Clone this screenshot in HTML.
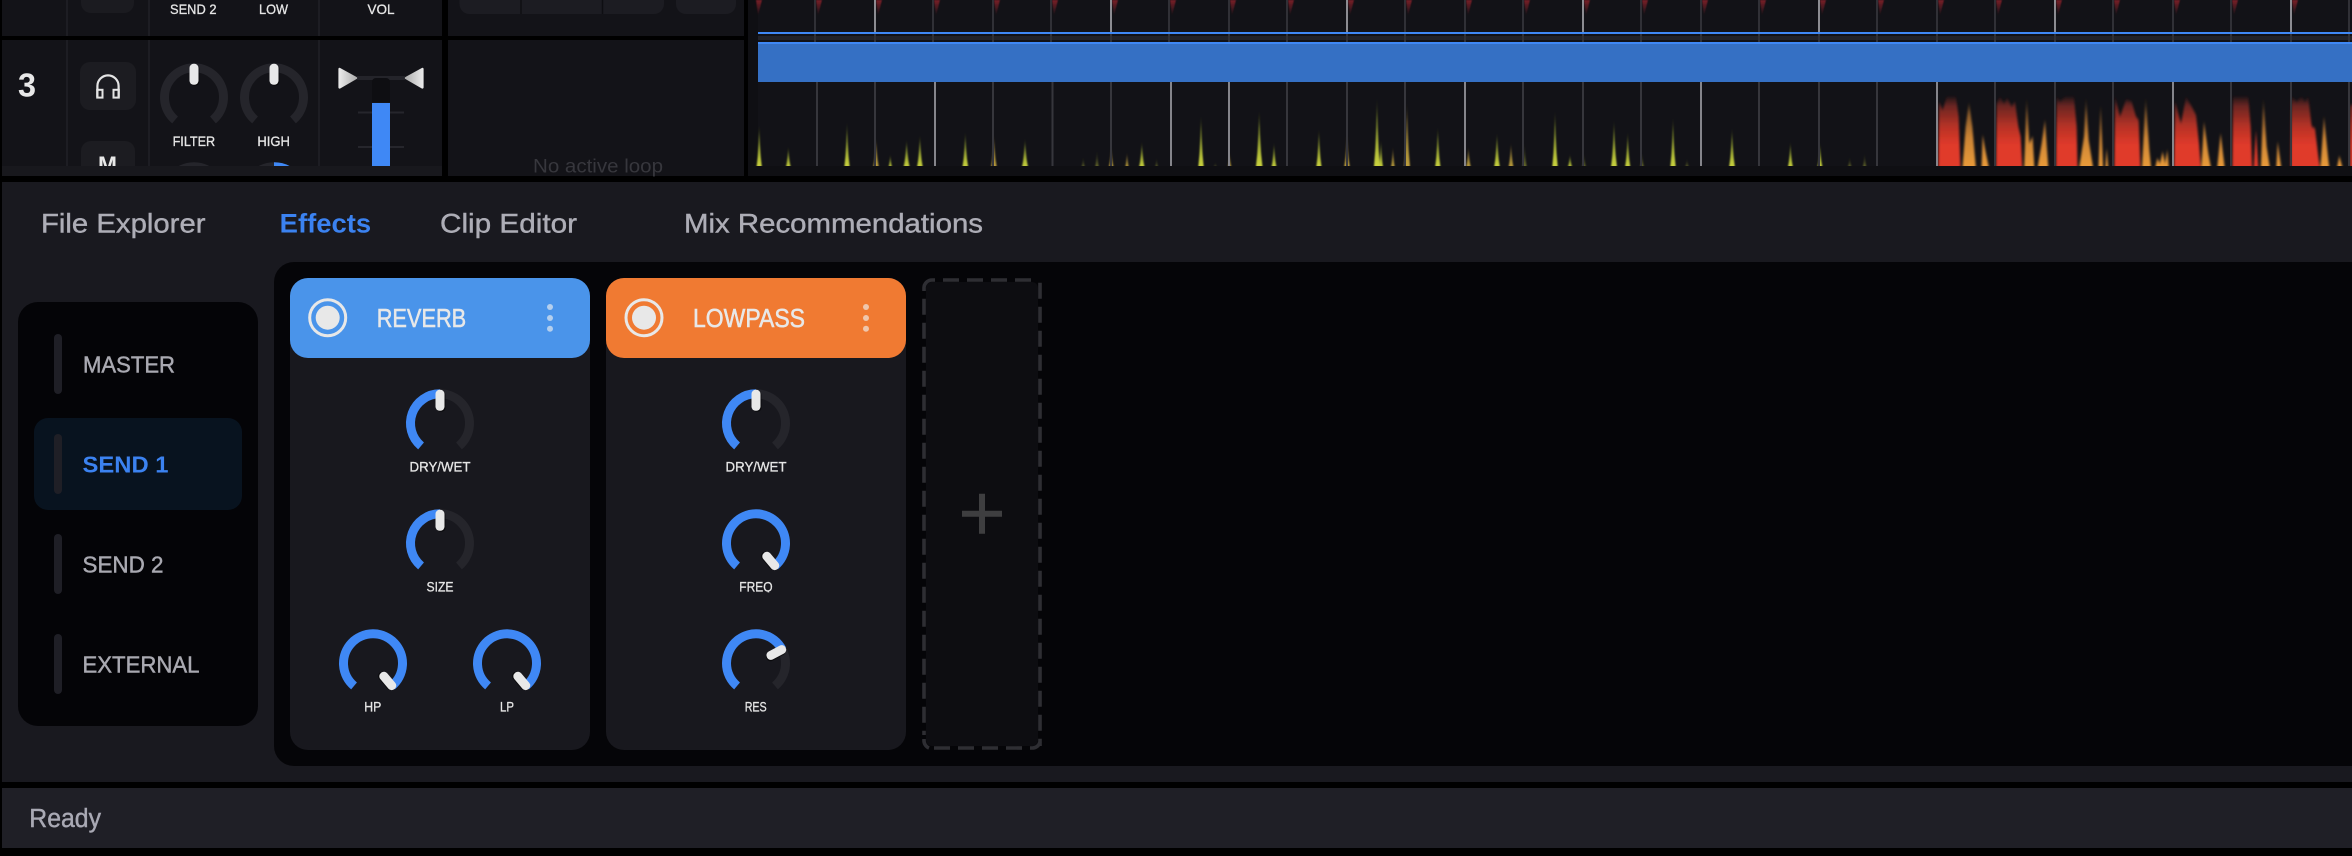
<!DOCTYPE html>
<html lang="en">
<head>
<meta charset="utf-8">
<title>Mixer Effects</title>
<style>
html,body{margin:0;padding:0;background:#000;width:2352px;height:856px;overflow:hidden}
svg{display:block}
text{font-family:"Liberation Sans",sans-serif}
text[fill="#e6e6e6"]{stroke:#e6e6e6;stroke-width:.3px}
text[fill="#e8e8e8"]{stroke:#e8e8e8;stroke-width:.55px}
text[fill="#adadb6"]{stroke:#adadb6;stroke-width:.4px}
text[fill="#a9a9b1"]{stroke:#a9a9b1;stroke-width:.45px}
text[fill="#a9a9b4"]{stroke:#a9a9b4;stroke-width:.4px}
</style>
</head>
<body>
<svg xmlns="http://www.w3.org/2000/svg" width="2352" height="856" viewBox="0 0 2352 856">
<defs>
  <linearGradient id="gy" x1="0" y1="0" x2="0" y2="1"><stop offset="0" stop-color="#5f6a20" stop-opacity=".1"/><stop offset=".3" stop-color="#6f7a28"/><stop offset=".75" stop-color="#b5c038"/><stop offset="1" stop-color="#d0d840"/></linearGradient>
  <linearGradient id="go" x1="0" y1="0" x2="0" y2="1"><stop offset="0" stop-color="#5f4a20" stop-opacity=".1"/><stop offset=".3" stop-color="#75622e"/><stop offset=".75" stop-color="#ad9238"/><stop offset="1" stop-color="#c2a23e"/></linearGradient>
  <linearGradient id="gd" x1="0" y1="0" x2="0" y2="1"><stop offset="0" stop-color="#4e5420" stop-opacity="0"/><stop offset="1" stop-color="#7b7f30"/></linearGradient>
  <linearGradient id="gr" x1="0" y1="0" x2="0" y2="1"><stop offset="0" stop-color="#7a1e27"/><stop offset="1" stop-color="#7a1e27" stop-opacity="0"/></linearGradient>
  <linearGradient id="red" gradientUnits="userSpaceOnUse" x1="0" y1="105" x2="0" y2="318"><stop offset="0" stop-color="#4a1c1c" stop-opacity=".25"/><stop offset=".15" stop-color="#6a2622"/><stop offset=".45" stop-color="#b83226"/><stop offset=".7" stop-color="#e03a2a"/><stop offset="1" stop-color="#e03a2a"/></linearGradient>
  <linearGradient id="org" gradientUnits="userSpaceOnUse" x1="0" y1="105" x2="0" y2="318"><stop offset="0" stop-color="#5a4020" stop-opacity=".25"/><stop offset=".25" stop-color="#85582a"/><stop offset=".6" stop-color="#cc8434"/><stop offset="1" stop-color="#e89a3a"/></linearGradient>
  <linearGradient id="tri" x1="0" y1="0" x2="1" y2="0"><stop offset="0" stop-color="#e8e8e8"/><stop offset="1" stop-color="#b0b0b0"/></linearGradient>
  <linearGradient id="tri2" x1="1" y1="0" x2="0" y2="0"><stop offset="0" stop-color="#e8e8e8"/><stop offset="1" stop-color="#b0b0b0"/></linearGradient>
  <filter id="b1" filterUnits="userSpaceOnUse" x="740" y="70" width="1612" height="120"><feGaussianBlur stdDeviation=".7 1.6"/></filter>
  <filter id="b2" filterUnits="userSpaceOnUse" x="0" y="0" width="1400" height="400"><feGaussianBlur stdDeviation="3 5"/></filter>
  <filter id="b3" x="-50%" y="-20%" width="200%" height="140%"><feGaussianBlur stdDeviation=".6"/></filter>
  <clipPath id="c1"><rect x="2" y="40" width="440" height="126"/></clipPath>
  <clipPath id="c2"><rect x="748" y="82" width="1604" height="84"/></clipPath>
  <clipPath id="c3"><rect x="730" y="575" width="50" height="17.4"/></clipPath>
  <path id="s" d="M-3 0L-1.6 -.28L-.7 -.6L0 -1L.7 -.6L1.6 -.28L3 0Z"/>
  <path id="rs" d="M1 0H7L3 16Z" fill="url(#gr)"/>
  <g id="kh"><rect x="-3.5" y="-32.5" width="9" height="21" rx="4.2" fill="#000" opacity=".55"/><rect x="-4.5" y="-33.5" width="9" height="21" rx="4.2" fill="#e8e8e8"/></g>
  <path id="tr" d="M-18.96 22.6A29.5 29.5 0 1 1 18.96 22.6" fill="none" stroke="#25252b" stroke-width="9"/>
  <path id="b0" d="M-18.96 22.6A29.5 29.5 0 0 1 0 -29.5" fill="none" stroke="#3f88f5" stroke-width="9"/>
  <path id="bf" d="M-18.96 22.6A29.5 29.5 0 1 1 18.96 22.6" fill="none" stroke="#3f88f5" stroke-width="9"/>
  <path id="bm" d="M-18.96 22.6A29.5 29.5 0 1 1 26.05 -13.85" fill="none" stroke="#3f88f5" stroke-width="9"/>
</defs>

<rect width="2352" height="856" fill="#000"/>

<!-- mixer column -->
<rect x="2" y="0" width="440" height="36" fill="#131318"/>
<rect x="2" y="40" width="440" height="136" fill="#131318"/>
<rect x="2" y="166" width="440" height="10" fill="#18181d"/>
<path d="M67 0V36M149 0V36M319 0V36M67 40V166M149 40V166M319 40V166" stroke="#1d1d23" stroke-width="2"/>
<path d="M81 0H134V3A10 10 0 0 1 124 13H91A10 10 0 0 1 81 3Z" fill="#1b1b20"/>
<text x="170" y="14" font-size="14" fill="#e6e6e6" textLength="46.5" lengthAdjust="spacingAndGlyphs">SEND 2</text>
<text x="259" y="14" font-size="14" fill="#e6e6e6" textLength="29" lengthAdjust="spacingAndGlyphs">LOW</text>
<text x="367.5" y="14" font-size="14" fill="#e6e6e6" textLength="27" lengthAdjust="spacingAndGlyphs">VOL</text>

<text x="18" y="96.5" font-size="33" font-weight="bold" fill="#e8e8e8" textLength="18" lengthAdjust="spacingAndGlyphs" style="stroke-width:0">3</text>
<rect x="80" y="62" width="56" height="48" rx="10" fill="#1c1c21"/>
<path d="M97.4 97V86A10.6 10.6 0 0 1 118.6 86V97" fill="none" stroke="#e4e4e4" stroke-width="2.2"/>
<rect x="97.2" y="89.8" width="5.3" height="7.8" fill="none" stroke="#e4e4e4" stroke-width="2"/>
<rect x="113.5" y="89.8" width="5.3" height="7.8" fill="none" stroke="#e4e4e4" stroke-width="2"/>

<g clip-path="url(#c1)">
  <rect x="81" y="141" width="54" height="40" rx="10" fill="#1c1c21"/>
  <text x="98" y="172" font-size="22" font-weight="bold" fill="#e8e8e8" textLength="19" lengthAdjust="spacingAndGlyphs" style="stroke-width:0">M</text>
  <g transform="translate(194,196.3)"><use href="#tr"/></g>
  <g transform="translate(274,196.3)"><use href="#tr"/><path d="M0 -29.5A29.5 29.5 0 0 1 19 -22.6" fill="none" stroke="#3f88f5" stroke-width="9"/></g>
  <rect x="372" y="103" width="18" height="70" fill="#3f88f5"/>
</g>
<g transform="translate(194,97.3)"><use href="#tr"/><use href="#kh"/></g>
<g transform="translate(274,97.3)"><use href="#tr"/><use href="#kh"/></g>
<text x="172.6" y="146" font-size="14" fill="#e6e6e6" textLength="42.6" lengthAdjust="spacingAndGlyphs">FILTER</text>
<text x="257.4" y="146" font-size="14" fill="#e6e6e6" textLength="32.5" lengthAdjust="spacingAndGlyphs">HIGH</text>

<!-- fader -->
<rect x="357" y="76" width="48" height="4" fill="#24242a"/>
<path d="M372 102V82A4 4 0 0 1 376 78H386A4 4 0 0 1 390 82V102Z" fill="#0e0e12"/>
<path d="M358 112.5H372M390 112.5H404M358 147H372M390 147H404" stroke="#26262c" stroke-width="2"/>
<path d="M339.6 69L356 78L339.6 87.4Z" fill="url(#tri)" stroke="url(#tri)" stroke-width="2.4" stroke-linejoin="round"/>
<path d="M422.4 69L406 78L422.4 87.4Z" fill="url(#tri2)" stroke="url(#tri2)" stroke-width="2.4" stroke-linejoin="round"/>

<!-- loop column -->
<rect x="448" y="0" width="296" height="36" fill="#131318"/>
<rect x="448" y="40" width="296" height="136" fill="#131318"/>
<path d="M459.5 0H664V4A10 10 0 0 1 654 14H469.5A10 10 0 0 1 459.5 4Z" fill="#1c1c22"/>
<path d="M521 0V14M602.5 0V14" stroke="#0e0e12" stroke-width="1.5"/>
<path d="M676 0H736V4A10 10 0 0 1 726 14H686A10 10 0 0 1 676 4Z" fill="#1c1c22"/>
<text x="533" y="172.7" font-size="19" fill="#37373d" textLength="130" lengthAdjust="spacingAndGlyphs">No active loop</text>

<!-- timeline -->
<rect x="748" y="0" width="1604" height="176" fill="#121217"/>
<rect x="748" y="0" width="10" height="176" fill="#0f0f13"/>
<rect x="748" y="166" width="1604" height="10" fill="#0f0f13"/>
<rect x="758" y="36" width="1594" height="4" fill="#222228"/>
<g filter="url(#b3)">
  <use href="#rs" x="755"/><use href="#rs" x="815"/><use href="#rs" x="875"/><use href="#rs" x="933"/><use href="#rs" x="993"/><use href="#rs" x="1051"/><use href="#rs" x="1111"/><use href="#rs" x="1169"/><use href="#rs" x="1229"/><use href="#rs" x="1287"/><use href="#rs" x="1347"/><use href="#rs" x="1405"/><use href="#rs" x="1465"/><use href="#rs" x="1523"/><use href="#rs" x="1583"/><use href="#rs" x="1641"/><use href="#rs" x="1701"/><use href="#rs" x="1759"/><use href="#rs" x="1819"/><use href="#rs" x="1877"/><use href="#rs" x="1937"/><use href="#rs" x="1995"/><use href="#rs" x="2055"/><use href="#rs" x="2113"/><use href="#rs" x="2173"/><use href="#rs" x="2231"/><use href="#rs" x="2291"/>
</g>
<path d="M815 0V42M875 0V42M933 0V42M993 0V42M1051 0V42M1111 0V42M1169 0V42M1229 0V42M1287 0V42M1347 0V42M1405 0V42M1465 0V42M1523 0V42M1583 0V42M1641 0V42M1701 0V42M1759 0V42M1819 0V42M1877 0V42M1937 0V42M1995 0V42M2055 0V42M2113 0V42M2173 0V42M2231 0V42M2291 0V42M2349 0V42" stroke="#303036" stroke-width="2"/>
<path d="M875 0V32M1111 0V32M1347 0V32M1583 0V32M1819 0V32M2055 0V32M2291 0V32" stroke="#8c8c92" stroke-width="2"/>
<rect x="758" y="32" width="1594" height="2" fill="#3f88f5"/>
<rect x="758" y="42" width="1594" height="2" fill="#3f88f5"/>
<rect x="758" y="44" width="1594" height="38" fill="#3570c4"/>

<g clip-path="url(#c2)">
 <g filter="url(#b1)">
  <g fill="url(#gy)">
   <use href="#s" transform="translate(759.2,170) scale(1,45)"/>
   <use href="#s" transform="translate(788.3,170) scale(1,23)"/>
   <use href="#s" transform="translate(847,170) scale(1,48)"/>
   <use href="#s" transform="translate(890.3,170) scale(.8,15)"/>
   <use href="#s" transform="translate(906.6,170) scale(1.2,30)"/>
   <use href="#s" transform="translate(919.9,170) scale(1.1,35)"/>
   <use href="#s" transform="translate(965.3,170) scale(1.1,38)"/>
   <use href="#s" transform="translate(1025,170) scale(1.2,31)"/>
   <use href="#s" transform="translate(1141.8,170) scale(1.1,28)"/>
   <use href="#s" transform="translate(1201,170) scale(1,55)"/>
   <use href="#s" transform="translate(1259.2,170) scale(1.2,60)"/>
   <use href="#s" transform="translate(1274,170) scale(1,27)"/>
   <use href="#s" transform="translate(1318.9,170) scale(1,41)"/>
   <use href="#s" transform="translate(1377,170) scale(1.1,72)"/>
   <use href="#s" transform="translate(1381,170) scale(.8,30)"/>
   <use href="#s" transform="translate(1437.8,170) scale(1,43)"/>
   <use href="#s" transform="translate(1497,170) scale(1.1,37)"/>
   <use href="#s" transform="translate(1555,170) scale(1,60)"/>
   <use href="#s" transform="translate(1570,170) scale(1,15)"/>
   <use href="#s" transform="translate(1614,170) scale(1.1,50)"/>
   <use href="#s" transform="translate(1627.7,170) scale(1,38)"/>
   <use href="#s" transform="translate(1673,170) scale(1,53)"/>
   <use href="#s" transform="translate(1732,170) scale(1.1,42)"/>
   <use href="#s" transform="translate(1790.4,170) scale(1,28)"/>
   <use href="#s" transform="translate(1820,170) scale(1,27)"/>
  </g>
  <g fill="url(#go)">
   <use href="#s" transform="translate(876,170) scale(1.1,32)"/>
   <use href="#s" transform="translate(993.9,170) scale(1.1,35)"/>
   <use href="#s" transform="translate(1111.2,170) scale(1,23)"/>
   <use href="#s" transform="translate(1127,170) scale(.8,17)"/>
   <use href="#s" transform="translate(1229.6,170) scale(.8,17)"/>
   <use href="#s" transform="translate(1347,170) scale(1.1,37)"/>
   <use href="#s" transform="translate(1392.9,170) scale(.8,23)"/>
   <use href="#s" transform="translate(1407,170) scale(1.1,68)"/>
   <use href="#s" transform="translate(1468.4,170) scale(1,23)"/>
   <use href="#s" transform="translate(1511,170) scale(1,27)"/>
  </g>
  <g fill="url(#gd)">
   <use href="#s" transform="translate(1083.2,170) scale(.8,13)"/>
   <use href="#s" transform="translate(1097,170) scale(.8,20)"/>
   <use href="#s" transform="translate(1156.6,170) scale(.7,12)"/>
   <use href="#s" transform="translate(1215.3,170) scale(.9,7)"/>
   <use href="#s" transform="translate(1524.5,170) scale(.9,28)"/>
   <use href="#s" transform="translate(1584,170) scale(.9,17)"/>
   <use href="#s" transform="translate(1642,170) scale(.9,18)"/>
   <use href="#s" transform="translate(1687,170) scale(.9,11)"/>
   <use href="#s" transform="translate(1849.7,170) scale(.9,13)"/>
   <use href="#s" transform="translate(1864.6,170) scale(.8,17)"/>
  </g>
 </g>
 <g transform="translate(1900,60) scale(.33333)" filter="url(#b2)">
  <g fill="url(#red)">
   <polygon points="115,340 117,125 128,150 140,112 168,112 176,170 182,340"/>
   <polygon points="288,340 290,130 300,112 312,130 322,115 335,140 345,125 355,200 362,230 368,340"/>
   <polygon points="468,340 470,112 480,125 495,112 522,112 530,200 533,340"/>
   <polygon points="643,340 645,110 660,170 678,120 695,125 708,170 716,180 722,340"/>
   <polygon points="822,340 825,125 843,190 858,112 875,140 888,165 897,250 904,340"/>
   <polygon points="997,340 999,112 1045,112 1052,200 1057,340"/>
   <polygon points="1060,340 1068,210 1076,340"/>
   <polygon points="1172,340 1174,112 1190,125 1205,112 1215,125 1225,112 1235,200 1245,205 1255,290 1262,340"/>
   <polygon points="1350,340 1350,135 1360,135 1360,340"/>
  </g>
  <g fill="url(#org)">
   <polygon points="186,340 197,200 207,128 217,200 229,340"/>
   <polygon points="244,340 248,225 256,270 270,340"/>
   <polygon points="372,340 380,112 388,250 398,230 404,340"/>
   <polygon points="410,340 425,250 435,180 446,340"/>
   <polygon points="535,340 552,230 558,112 566,240 582,340"/>
   <polygon points="595,340 602,135 610,340"/>
   <polygon points="615,340 620,265 626,340"/>
   <polygon points="725,340 737,112 748,270 755,340"/>
   <polygon points="762,340 772,295 780,310 788,275 795,310 802,270 808,340"/>
   <polygon points="903,340 912,185 925,280 936,340"/>
   <polygon points="950,340 962,220 976,340"/>
   <polygon points="1082,340 1090,115 1100,260 1112,340"/>
   <polygon points="1128,340 1133,245 1146,340"/>
   <polygon points="1260,340 1272,170 1285,300 1290,340"/>
   <polygon points="1308,340 1318,288 1332,340"/>
  </g>
 </g>
</g>
<path d="M817 82V166M875 82V166M993 82V166M1052.5 82V166M1111 82V166M1287 82V166M1347 82V166M1405 82V166M1523 82V166M1583 82V166M1641 82V166M1759 82V166M1819 82V166M1877 82V166M1995 82V166M2055 82V166M2113 82V166M2231 82V166M2291 82V166M2349 82V166" stroke="#36363c" stroke-width="2"/>
<path d="M935 82V166M1171 82V166M1229 82V166M1465 82V166M1701 82V166M1937 82V166M2173 82V166" stroke="#85858b" stroke-width="2"/>

<!-- main panel -->
<rect x="2" y="182" width="2350" height="600" fill="#19191f"/>
<text x="41" y="232.7" font-size="27" fill="#adadb6" textLength="164.5" lengthAdjust="spacingAndGlyphs">File Explorer</text>
<text x="279.7" y="232.7" font-size="27" font-weight="bold" fill="#3b82f0" textLength="91.5" lengthAdjust="spacingAndGlyphs">Effects</text>
<text x="440" y="232.7" font-size="27" fill="#adadb6" textLength="137" lengthAdjust="spacingAndGlyphs">Clip Editor</text>
<text x="684" y="232.7" font-size="27" fill="#adadb6" textLength="299" lengthAdjust="spacingAndGlyphs">Mix Recommendations</text>

<!-- sidebar -->
<rect x="18" y="302" width="240" height="424" rx="20" fill="#040407"/>
<rect x="34" y="418" width="208" height="92" rx="14" fill="#08131f"/>
<rect x="54" y="334" width="8" height="60" rx="4" fill="#1f1f26"/>
<rect x="54" y="434" width="8" height="60" rx="4" fill="#1f1f26"/>
<rect x="54" y="534" width="8" height="60" rx="4" fill="#1f1f26"/>
<rect x="54" y="634" width="8" height="60" rx="4" fill="#1f1f26"/>
<text x="83" y="372.7" font-size="23" fill="#a9a9b1" textLength="92" lengthAdjust="spacingAndGlyphs">MASTER</text>
<text x="82.5" y="472.7" font-size="23" font-weight="bold" fill="#3b82f0" textLength="86" lengthAdjust="spacingAndGlyphs">SEND 1</text>
<text x="82.5" y="572.7" font-size="23" fill="#a9a9b1" textLength="81" lengthAdjust="spacingAndGlyphs">SEND 2</text>
<text x="82.5" y="672.7" font-size="23" fill="#a9a9b1" textLength="117" lengthAdjust="spacingAndGlyphs">EXTERNAL</text>

<!-- effects rack -->
<path d="M2352 262H294A20 20 0 0 0 274 282V746A20 20 0 0 0 294 766H2352Z" fill="#050508"/>

<!-- reverb card -->
<rect x="290" y="278" width="300" height="472" rx="18" fill="#18181e"/>
<path d="M290 358V296A18 18 0 0 1 308 278H572A18 18 0 0 1 590 296V340A18 18 0 0 1 572 358H308A18 18 0 0 1 290 340Z" fill="#4a94ea"/>
<circle cx="327.7" cy="317.7" r="18" fill="none" stroke="#e8e8e8" stroke-width="3"/>
<circle cx="327.7" cy="317.7" r="12" fill="#e8e8e8"/>
<text x="376.7" y="327" font-size="26" fill="#e8e8e8" textLength="89.5" lengthAdjust="spacingAndGlyphs">REVERB</text>
<circle cx="550" cy="307" r="3" fill="#b4cfee"/><circle cx="550" cy="318" r="3" fill="#b4cfee"/><circle cx="550" cy="328.7" r="3" fill="#b4cfee"/>

<g transform="translate(440,423.3)"><use href="#tr"/><use href="#b0"/><use href="#kh"/></g>
<text x="409.5" y="471.7" font-size="14" fill="#e6e6e6" textLength="61" lengthAdjust="spacingAndGlyphs">DRY/WET</text>
<g transform="translate(440,543.3)"><use href="#tr"/><use href="#b0"/><use href="#kh"/></g>
<text x="426.5" y="591.7" font-size="14" fill="#e6e6e6" textLength="27" lengthAdjust="spacingAndGlyphs">SIZE</text>
<g transform="translate(373,663.3)"><use href="#bf"/><use href="#kh" transform="rotate(140)"/></g>
<text x="364.3" y="711.7" font-size="14" fill="#e6e6e6" textLength="17" lengthAdjust="spacingAndGlyphs">HP</text>
<g transform="translate(507,663.3)"><use href="#bf"/><use href="#kh" transform="rotate(140)"/></g>
<text x="500" y="711.7" font-size="14" fill="#e6e6e6" textLength="14" lengthAdjust="spacingAndGlyphs">LP</text>

<!-- lowpass card -->
<rect x="606" y="278" width="300" height="472" rx="18" fill="#18181e"/>
<path d="M606 358V296A18 18 0 0 1 624 278H888A18 18 0 0 1 906 296V340A18 18 0 0 1 888 358H624A18 18 0 0 1 606 340Z" fill="#f07a32"/>
<circle cx="644" cy="317.7" r="18" fill="none" stroke="#e8e8e8" stroke-width="3"/>
<circle cx="644" cy="317.7" r="12" fill="#e8e8e8"/>
<text x="693" y="327" font-size="26" fill="#e8e8e8" textLength="112" lengthAdjust="spacingAndGlyphs">LOWPASS</text>
<circle cx="866" cy="307" r="3" fill="#efc6ac"/><circle cx="866" cy="318" r="3" fill="#efc6ac"/><circle cx="866" cy="328.7" r="3" fill="#efc6ac"/>

<g transform="translate(756,423.3)"><use href="#tr"/><use href="#b0"/><use href="#kh"/></g>
<text x="725.5" y="471.7" font-size="14" fill="#e6e6e6" textLength="61" lengthAdjust="spacingAndGlyphs">DRY/WET</text>
<g transform="translate(756,543.3)"><use href="#bf"/><use href="#kh" transform="rotate(140)"/></g>
<g clip-path="url(#c3)"><text x="739.3" y="591.7" font-size="14" fill="#e6e6e6" textLength="33.3" lengthAdjust="spacingAndGlyphs">FREQ</text></g>
<g transform="translate(756,663.3)"><use href="#tr"/><use href="#bm"/><use href="#kh" transform="rotate(62)"/></g>
<text x="744.7" y="711.7" font-size="14" fill="#e6e6e6" textLength="22" lengthAdjust="spacingAndGlyphs">RES</text>

<!-- add card -->
<rect x="926" y="282" width="112" height="464" rx="6" fill="#0d0d11"/>
<g fill="none" stroke="#2e2e33" stroke-width="3.6">
  <path d="M924 298.7V735" stroke-dasharray="16 8"/>
  <path d="M1040 282.7V746" stroke-dasharray="16 8"/>
  <path d="M943 280H1031" stroke-dasharray="16 8"/>
  <path d="M934 748H1022" stroke-dasharray="16 8"/>
  <path d="M924 291V288A8 8 0 0 1 932 280H935"/>
  <path d="M924 739V740A8 8 0 0 0 929 748"/>
  <path d="M1030 748H1032A8 8 0 0 0 1040 742"/>
</g>
<path d="M962 513.7H1002M982 493.7V533.7" stroke="#3e3e40" stroke-width="6" fill="none"/>

<!-- status bar -->
<rect x="2" y="788" width="2350" height="60" fill="#1f1f26"/>
<text x="29.3" y="827" font-size="25.5" fill="#a9a9b4" textLength="71.7" lengthAdjust="spacingAndGlyphs">Ready</text>
</svg>
</body>
</html>
